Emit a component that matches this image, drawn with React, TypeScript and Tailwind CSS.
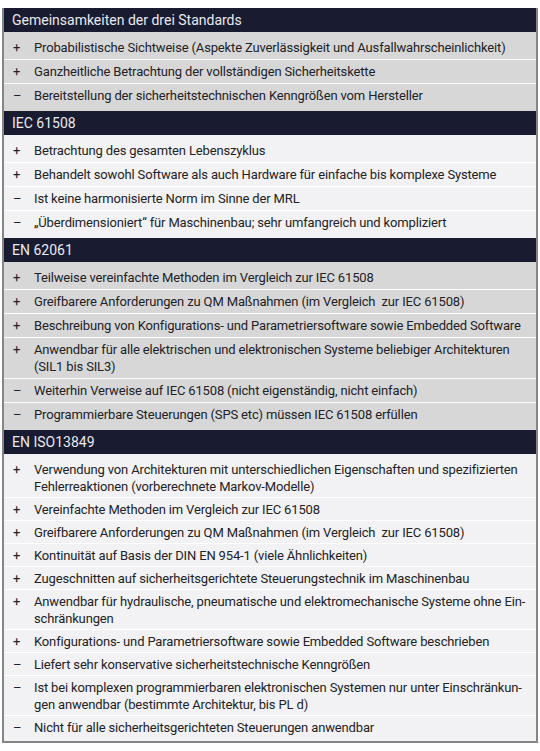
type Item = { sign: "+" | "–"; lines: string[] };

type Section = {
  title: string;
  shade: "dark" | "light";
  dense?: boolean;
  items: Item[];
};

const sections: Section[] = [
  {
    title: "Gemeinsamkeiten der drei Standards",
    shade: "dark",
    items: [
      { sign: "+", lines: ["Probabilistische Sichtweise (Aspekte Zuverlässigkeit und Ausfallwahrscheinlichkeit)"] },
      { sign: "+", lines: ["Ganzheitliche Betrachtung der vollständigen Sicherheitskette"] },
      { sign: "–", lines: ["Bereitstellung der sicherheitstechnischen Kenngrößen vom Hersteller"] },
    ],
  },
  {
    title: "IEC 61508",
    shade: "light",
    items: [
      { sign: "+", lines: ["Betrachtung des gesamten Lebenszyklus"] },
      { sign: "+", lines: ["Behandelt sowohl Software als auch Hardware für einfache bis komplexe Systeme"] },
      { sign: "–", lines: ["Ist keine harmonisierte Norm im Sinne der MRL"] },
      { sign: "–", lines: ["„Überdimensioniert“ für Maschinenbau; sehr umfangreich und kompliziert"] },
    ],
  },
  {
    title: "EN 62061",
    shade: "dark",
    items: [
      { sign: "+", lines: ["Teilweise vereinfachte Methoden im Vergleich zur IEC 61508"] },
      { sign: "+", lines: ["Greifbarere Anforderungen zu QM Maßnahmen (im Vergleich  zur IEC 61508)"] },
      { sign: "+", lines: ["Beschreibung von Konfigurations- und Parametriersoftware sowie Embedded Software"] },
      {
        sign: "+",
        lines: [
          "Anwendbar für alle elektrischen und elektronischen Systeme beliebiger Architekturen",
          "(SIL1 bis SIL3)",
        ],
      },
      { sign: "–", lines: ["Weiterhin Verweise auf IEC 61508 (nicht eigenständig, nicht einfach)"] },
      { sign: "–", lines: ["Programmierbare Steuerungen (SPS etc) müssen IEC 61508 erfüllen"] },
    ],
  },
  {
    title: "EN ISO13849",
    shade: "light",
    dense: true,
    items: [
      {
        sign: "+",
        lines: [
          "Verwendung von Architekturen mit unterschiedlichen Eigenschaften und spezifizierten",
          "Fehlerreaktionen (vorberechnete Markov-Modelle)",
        ],
      },
      { sign: "+", lines: ["Vereinfachte Methoden im Vergleich zur IEC 61508"] },
      { sign: "+", lines: ["Greifbarere Anforderungen zu QM Maßnahmen (im Vergleich  zur IEC 61508)"] },
      { sign: "+", lines: ["Kontinuität auf Basis der DIN EN 954-1 (viele Ähnlichkeiten)"] },
      { sign: "+", lines: ["Zugeschnitten auf sicherheitsgerichtete Steuerungstechnik im Maschinenbau"] },
      {
        sign: "+",
        lines: [
          "Anwendbar für hydraulische, pneumatische und elektromechanische Systeme ohne Ein-",
          "schränkungen",
        ],
      },
      { sign: "+", lines: ["Konfigurations- und Parametriersoftware sowie Embedded Software beschrieben"] },
      { sign: "–", lines: ["Liefert sehr konservative sicherheitstechnische Kenngrößen"] },
      {
        sign: "–",
        lines: [
          "Ist bei komplexen programmierbaren elektronischen Systemen nur unter Einschränkun-",
          "gen anwendbar (bestimmte Architektur, bis PL d)",
        ],
      },
      { sign: "–", lines: ["Nicht für alle sicherheitsgerichteten Steuerungen anwendbar"] },
    ],
  },
];

export default function App() {
  return (
    <div
      className="w-[540px] h-[751px] bg-white pt-[8px] px-[2px]"
      style={{ fontFamily: "Roboto, 'Liberation Sans', sans-serif" }}
    >
      <div className="border-2 border-t-0 border-[#858585]">
        {sections.map((section, si) => (
          <div key={si}>
            <div className="h-[24px] bg-[#191c31] text-[#e9e9ee] text-[14px] leading-[24px] pl-[8px]">
              {section.title}
            </div>
            <div
              className={`${section.dense ? "pt-[4px] pb-[3px]" : "py-[4px]"} ${
                section.shade === "dark" ? "bg-[#d7d7d8]" : "bg-[#f2f2f4]"
              }`}
            >
              {section.items.map((item, ii) => (
                <div
                  key={ii}
                  className={`flex pl-[9px] ${
                    section.dense ? "py-[2.5px]" : "py-[3px]"
                  } text-[13px] leading-[17px] tracking-[-0.15px] text-[#222226] ${
                    ii < section.items.length - 1 ? "border-b border-white" : ""
                  }`}
                >
                  <div className="w-[21px] shrink-0">{item.sign}</div>
                  <div>
                    {item.lines.map((line, li) => (
                      <div key={li} className="whitespace-pre">
                        {line}
                      </div>
                    ))}
                  </div>
                </div>
              ))}
            </div>
          </div>
        ))}
      </div>
    </div>
  );
}
